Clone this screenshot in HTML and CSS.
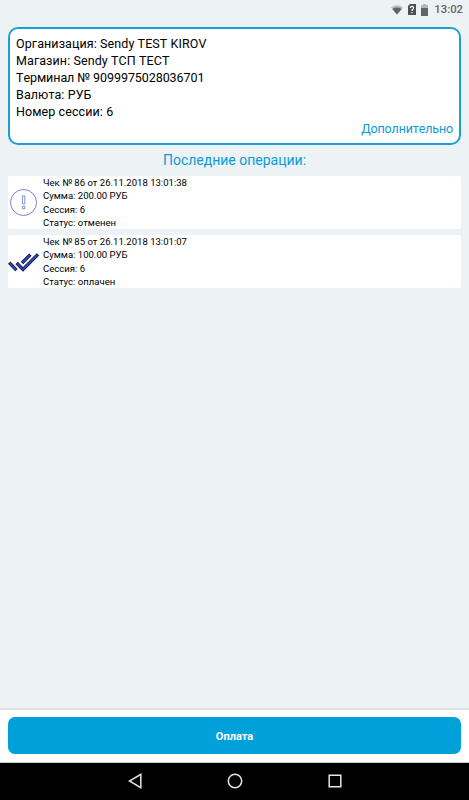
FILE: index.html
```html
<!DOCTYPE html>
<html lang="ru">
<head>
    <meta charset="UTF-8">
    <meta name="viewport" content="width=device-width, initial-scale=1.0">
    <title>Последние операции</title>
    <link rel="stylesheet" href="styles.css">
</head>
<body>
    <div class="screen">
        <div class="status-bar">
            <svg class="wifi" width="12" height="10" viewBox="0 0 12 10">
                <path d="M0 2.4Q6-2 12 2.4L6 9.6Z" fill="#b9bdbf"/>
                <path d="M1.3 3.9Q6 1.2 10.7 3.9L6 9.6Z" fill="#626567"/>
            </svg>
            <svg class="sim" width="8" height="11" viewBox="0 0 8 11">
                <path d="M2 0H8V11H0V2Z" fill="#4d5052"/>
                <path d="M2.4 4Q2.4 2.4 4 2.4T5.6 4Q5.6 5 4 6V7M4 8V9.3" fill="none" stroke="#fff" stroke-width="1.2"/>
            </svg>
            <svg class="battery" width="7" height="12" viewBox="0 0 7 12">
                <path d="M2 0H5V1H7V4H0V1H2Z" fill="#b4b7b9"/>
                <path d="M0 4H7V12H0Z" fill="#626567"/>
            </svg>
            <span class="clock">13:02</span>
        </div>

        <div class="content">
            <div class="info-card">
                <p>Организация: Sendy TEST KIROV</p>
                <p>Магазин: Sendy ТСП ТЕСТ</p>
                <p class="terminal">Терминал № 9099975028036701</p>
                <p>Валюта: РУБ</p>
                <p>Номер сессии: 6</p>
                <a class="more">Дополнительно</a>
            </div>

            <h1 class="title">Последние операции:</h1>

            <div class="operation">
                <svg class="icon" width="32" height="32" viewBox="0 0 32 32">
                    <circle cx="15.5" cy="15.5" r="13" fill="none" stroke="#6672c6" stroke-width="0.9"/>
                    <path d="M14.4 8.9H16.8V16.9H14.4ZM14.4 19.3H16.8V21.7H14.4Z" fill="none" stroke="#6672c6" stroke-width="0.8"/>
                </svg>
                <div class="details">
                    <p>Чек № 86 от 26.11.2018 13:01:38</p>
                    <p>Сумма: 200.00 РУБ</p>
                    <p>Сессия: 6</p>
                    <p>Статус: отменен</p>
                </div>
            </div>

            <div class="operation">
                <svg class="icon" width="32" height="32" viewBox="0 0 32 32">
                    <path d="M1.2 16.6L8.4 24.2M8.6 17L15 23.4L30 8.4M14 17L22.4 8.6" fill="none" stroke="#10143a" stroke-width="3.4"/>
                    <path d="M1.7 17.1L7.9 23.7M9.1 17.5L15 23.4L29.5 8.9M14.5 16.5L21.9 9.1" fill="none" stroke="#2c46b4" stroke-width="2"/>
                </svg>
                <div class="details">
                    <p>Чек № 85 от 26.11.2018 13:01:07</p>
                    <p>Сумма: 100.00 РУБ</p>
                    <p>Сессия: 6</p>
                    <p>Статус: оплачен</p>
                </div>
            </div>
        </div>

        <div class="footer">
            <button class="pay-button">Оплата</button>
        </div>

        <div class="nav-bar">
            <svg width="14" height="16" viewBox="0 0 14 16">
                <path d="M12.8 1.3V14.7L1.4 8Z"/>
            </svg>
            <svg width="16" height="16" viewBox="0 0 16 16">
                <circle cx="8" cy="8" r="6.7"/>
            </svg>
            <svg width="14" height="16" viewBox="0 0 14 16">
                <path d="M1.2 2.2H12.8V13.8H1.2Z"/>
            </svg>
        </div>
    </div>
</body>
</html>
```

FILE: styles.css
```css
* {
    margin: 0;
    padding: 0;
    box-sizing: border-box;
}

body {
    font-family: Roboto, "Liberation Sans", sans-serif;
    font-kerning: none;
    background: #edf2f5;
    color: #000;
}

.screen {
    height: 100vh;
    display: flex;
    flex-direction: column;
}

.status-bar {
    height: 19px;
    padding-right: 6px;
    display: flex;
    align-items: center;
    justify-content: flex-end;
}

.wifi {
    margin-right: 5px;
}

.sim {
    margin-right: 5px;
}

.battery {
    margin-right: 6px;
}

.clock {
    font-size: 11.3px;
    font-weight: 500;
    line-height: 19px;
    color: #636668;
}

.content {
    flex: 1;
    padding: 8px 8px 0;
}

.info-card {
    height: 118px;
    padding: 6px 6px 0;
    background: #fff;
    border: 2px solid #1b9fd8;
    border-radius: 10px;
    font-size: 12.5px;
    line-height: 17.1px;
}

.info-card p {
    letter-spacing: 0.09px;
}

.info-card .terminal {
    letter-spacing: -0.07px;
}

.more {
    display: block;
    text-align: right;
    letter-spacing: -0.14px;
    color: #0b9bd8;
}

.title {
    padding-top: 3px;
    margin-bottom: 3px;
    font-size: 14px;
    font-weight: 400;
    line-height: 25px;
    text-align: center;
    color: #0b9bd8;
}

.operation {
    height: 53px;
    margin-bottom: 6px;
    display: flex;
    align-items: center;
    background: #fff;
    border-radius: 2px;
}

.icon {
    margin-right: 3px;
}

.details {
    font-size: 9.55px;
    line-height: 13.3px;
}

.footer {
    height: 55px;
    padding: 7px 8px 0;
    background: #fff;
    border-top: 2px solid #dfe2e4;
    border-bottom: 1px solid #c8c8c8;
}

.pay-button {
    display: block;
    width: 100%;
    height: 37px;
    padding-top: 2px;
    background: #00a1db;
    border: none;
    border-radius: 7px;
    font-family: inherit;
    font-size: 11px;
    font-weight: 700;
    color: #fff;
}

.nav-bar {
    height: 37px;
    padding-bottom: 1px;
    display: flex;
    align-items: center;
    justify-content: center;
    gap: 85px;
    background: #000;
}

.nav-bar svg {
    fill: none;
    stroke: #e6e6e6;
    stroke-width: 1.5;
}
```
